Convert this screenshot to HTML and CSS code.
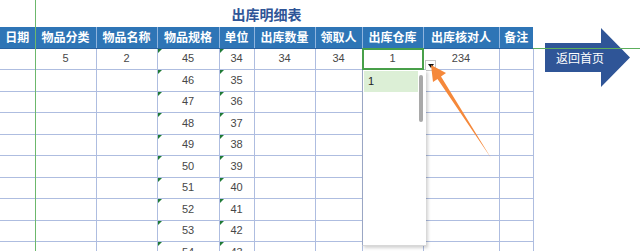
FILE: index.html
```html
<!DOCTYPE html>
<html lang="zh-CN">
<head>
    <meta charset="UTF-8">
    <title>出库明细表</title>
    <link rel="stylesheet" href="styles.css">
</head>
<body>
    <div class="sheet">
        <div class="title-row">
            <h1 class="title">出库明细表</h1>
        </div>
        <table class="grid">
            <colgroup>
                <col class="w35"><col class="w61"><col class="w61"><col class="w62"><col class="w35">
                <col class="w61"><col class="w47"><col class="w61"><col class="w76"><col class="w34">
            </colgroup>
            <thead>
                <tr>
                    <th>日期</th>
                    <th>物品分类</th>
                    <th>物品名称</th>
                    <th>物品规格</th>
                    <th>单位</th>
                    <th>出库数量</th>
                    <th>领取人</th>
                    <th>出库仓库</th>
                    <th>出库核对人</th>
                    <th>备注</th>
                </tr>
            </thead>
            <tbody>
                <tr>
                    <td></td><td>5</td><td>2</td><td class="txt">45</td><td class="txt">34</td>
                    <td>34</td><td>34</td><td class="active">1</td><td>234</td><td></td>
                </tr>
                <tr><td></td><td></td><td></td><td class="txt">46</td><td class="txt">35</td><td></td><td></td><td></td><td></td><td></td></tr>
                <tr><td></td><td></td><td></td><td class="txt">47</td><td class="txt">36</td><td></td><td></td><td></td><td></td><td></td></tr>
                <tr><td></td><td></td><td></td><td class="txt">48</td><td class="txt">37</td><td></td><td></td><td></td><td></td><td></td></tr>
                <tr><td></td><td></td><td></td><td class="txt">49</td><td class="txt">38</td><td></td><td></td><td></td><td></td><td></td></tr>
                <tr><td></td><td></td><td></td><td class="txt">50</td><td class="txt">39</td><td></td><td></td><td></td><td></td><td></td></tr>
                <tr><td></td><td></td><td></td><td class="txt">51</td><td class="txt">40</td><td></td><td></td><td></td><td></td><td></td></tr>
                <tr><td></td><td></td><td></td><td class="txt">52</td><td class="txt">41</td><td></td><td></td><td></td><td></td><td></td></tr>
                <tr><td></td><td></td><td></td><td class="txt">53</td><td class="txt">42</td><td></td><td></td><td></td><td></td><td></td></tr>
                <tr><td></td><td></td><td></td><td class="txt">54</td><td class="txt">43</td><td></td><td></td><td></td><td></td><td></td></tr>
            </tbody>
        </table>

        <!-- freeze pane lines -->
        <div class="freeze-v"></div>
        <div class="freeze-h"></div>

        <!-- validation dropdown -->
        <div class="dd-btn"><span class="dd-caret"></span></div>
        <div class="dd-list">
            <div class="dd-item">1</div>
            <div class="dd-thumb"></div>
        </div>

        <svg class="pointer" width="640" height="251" viewBox="0 0 640 251">
            <polygon points="431,65 446,73 441,76.5 491,158 437.5,79 433,82" fill="#f5883a"/>
        </svg>

        <a class="home-btn" href="#">
            <svg class="home-shape" width="86" height="59" viewBox="0 0 86 59">
                <polygon points="0,15 56,15 56,0 85,29.5 56,59 56,44 0,44" fill="#2f5597"/>
            </svg>
            <span class="home-label">返回首页</span>
        </a>
    </div>
</body>
</html>
```

FILE: styles.css
```css
* {
    box-sizing: border-box;
    margin: 0;
    padding: 0;
}

body {
    background: white;
    font-family: "Noto Sans CJK SC", sans-serif;
    overflow: hidden;
}

.sheet {
    position: relative;
    width: 640px;
    height: 251px;
    overflow: hidden;
}

.title-row {
    width: 533px;
    height: 27px;
    display: flex;
    align-items: center;
    justify-content: center;
}

.title {
    font-size: 14px;
    font-weight: bold;
    color: #2f5597;
    line-height: 1;
    padding-top: 1px;
}

.grid {
    width: 533px;
    table-layout: fixed;
    border-collapse: collapse;
}

.w35 { width: 35px; }
.w61 { width: 61px; }
.w62 { width: 62px; }
.w47 { width: 47px; }
.w76 { width: 76px; }
.w34 { width: 34px; }

th {
    position: relative;
    z-index: 2;
    height: 21px;
    background: #2e75b6;
    color: white;
    font-size: 12px;
    font-weight: bold;
    white-space: nowrap;
    overflow: hidden;
    border-left: 1px solid #8fb4de;
    border-bottom: 1px solid #2a62a0;
    line-height: 20px;
}

th:first-child {
    border-left: none;
}

td {
    position: relative;
    height: 21.5px;
    border: 1px solid #aebde0;
    text-align: center;
    font-family: "Liberation Sans", Arial, sans-serif;
    font-size: 11px;
    color: #474747;
    line-height: 19px;
}

td:first-child {
    border-left: none;
}

/* number stored as text marker */
td.txt::before {
    content: "";
    position: absolute;
    left: 0;
    top: 0;
    border-top: 4px solid #1f7a36;
    border-right: 4px solid transparent;
}

td.active::after {
    content: "";
    position: absolute;
    left: -1px;
    top: -1px;
    right: -1px;
    bottom: -1px;
    border: 2px solid #48a04a;
}

.freeze-v {
    position: absolute;
    z-index: 1;
    left: 35px;
    top: 0;
    width: 1px;
    height: 251px;
    background: #6cb86c;
}

.freeze-h {
    position: absolute;
    left: 533px;
    top: 48px;
    width: 107px;
    height: 1px;
    background: #5cae5c;
    z-index: 3;
}

.dd-btn {
    position: absolute;
    z-index: 2;
    left: 425px;
    top: 60px;
    width: 11px;
    height: 11px;
    background: white;
    border: 1px solid #c6c6c6;
    display: flex;
    align-items: center;
    justify-content: center;
}

.dd-caret {
    border-top: 4px solid #111;
    border-left: 3px solid transparent;
    border-right: 3px solid transparent;
}

.dd-list {
    position: absolute;
    z-index: 2;
    left: 362px;
    top: 70px;
    width: 64px;
    height: 176px;
    background: white;
    border-left: 1px solid #9aa6c4;
    border-bottom: 1px solid #d8d8d8;
    box-shadow: 2px 2px 3px rgba(0, 0, 0, 0.18);
    padding: 1px 8px 0 1px;
}

.dd-item {
    height: 21px;
    background: #dcefd6;
    font-family: "Liberation Sans", Arial, sans-serif;
    font-size: 11px;
    color: #222;
    line-height: 21px;
    padding-left: 4px;
}

.dd-thumb {
    position: absolute;
    right: 3px;
    top: 5px;
    width: 4px;
    height: 47px;
    border-radius: 2px;
    background: #a9a9a9;
}

.pointer {
    position: absolute;
    z-index: 3;
    left: 0;
    top: 0;
    pointer-events: none;
}

.home-btn {
    position: absolute;
    z-index: 2;
    left: 545px;
    top: 28px;
    width: 86px;
    height: 59px;
    text-decoration: none;
}

.home-shape {
    display: block;
}

.home-label {
    position: absolute;
    left: 11px;
    top: 15px;
    height: 29px;
    display: flex;
    align-items: center;
    color: white;
    font-size: 12px;
    letter-spacing: 0;
}
```
